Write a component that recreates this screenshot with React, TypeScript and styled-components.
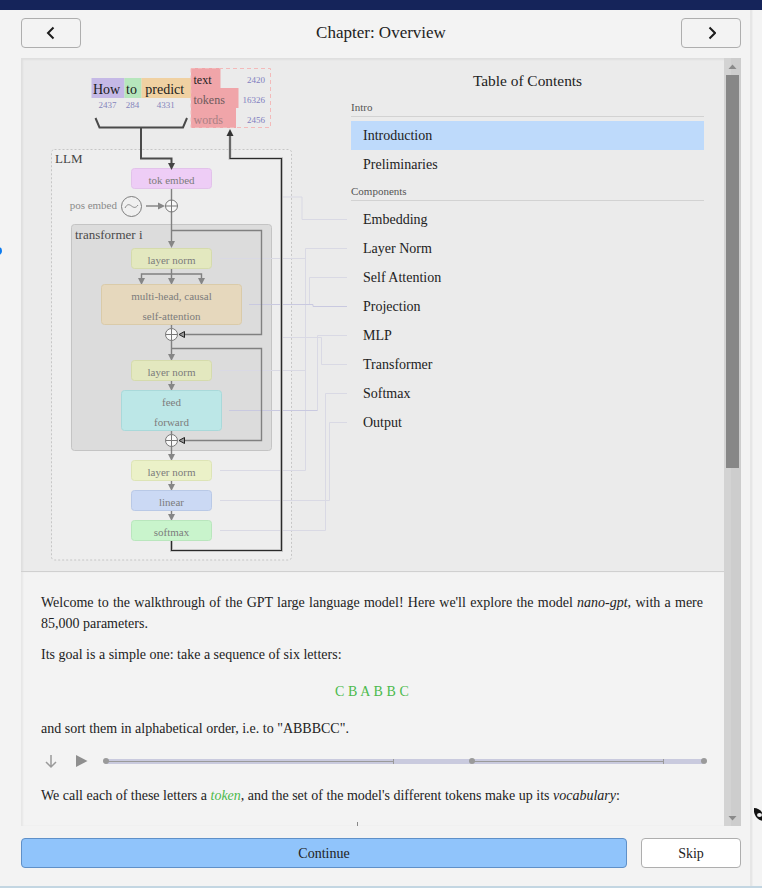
import React from "react";
import styled, { createGlobalStyle } from "styled-components";

const Global = createGlobalStyle`
  html, body { margin: 0; padding: 0; background: #f4f4f4; }
  body { font-family: "Liberation Serif", "Times New Roman", serif; color: #222; }
`;

const Page = styled.div`
  position: relative;
  width: 762px;
  height: 888px;
  overflow: hidden;
  background: #f4f4f4;
  display: flex;
  flex-direction: column;
  border-bottom: 0;
`;
const TopBar = styled.div`
  height: 10px;
  background: #15245a;
  flex: none;
`;
const Body = styled.div`
  flex: 1;
  display: flex;
  min-height: 0;
  border-bottom: 2px solid #c3d6e2;
`;
const Main = styled.main`
  width: 750px;
  flex: none;
  background: #f3f3f3;
  padding: 8px 9px 0 21px;
  box-sizing: border-box;
  display: flex;
  flex-direction: column;
`;
const SideStrip = styled.aside`
  flex: 1;
  background: #f4f4f4;
  border-left: 2px solid #e6e6e6;
  box-shadow: inset 1px 0 1px #eeeeee;
`;
const Header = styled.header`
  height: 30px;
  display: flex;
  align-items: center;
  justify-content: space-between;
  flex: none;
`;
const NavButton = styled.button`
  width: 60px;
  height: 30px;
  padding: 0;
  display: flex;
  align-items: center;
  justify-content: center;
  background: #f3f3f3;
  border: 1px solid #aeaeae;
  border-radius: 4px;
`;
const Title = styled.h1`
  margin: 0;
  font-size: 17px;
  font-weight: 400;
  color: #222;
`;
const Panel = styled.section`
  margin-top: 10px;
  height: 768px;
  flex: none;
  display: flex;
  overflow: hidden;
`;
const Content = styled.div`
  width: 703px;
  flex: none;
  display: flex;
  flex-direction: column;
  overflow: hidden;
  box-shadow: inset 2px 1px 2px rgba(0, 0, 0, 0.06);
`;
const Top = styled.div`
  height: 513px;
  flex: none;
  display: flex;
  background: #ebebeb;
  border-bottom: 1px solid #d0d0d0;
  box-shadow: inset 2px 2px 2px rgba(0, 0, 0, 0.05);
`;
const Diagram = styled.svg`
  width: 330px;
  height: 513px;
  flex: none;
  display: block;
`;
const Toc = styled.nav`
  width: 353px;
  flex: none;
`;
const TocTitle = styled.div`
  margin-top: 12px;
  height: 21px;
  line-height: 21px;
  text-align: center;
  font-size: 15.4px;
  color: #222;
`;
const SectionLabel = styled.div<{ $gap: number }>`
  margin-top: ${(p) => p.$gap}px;
  margin-bottom: 4px;
  height: 16px;
  line-height: 15px;
  font-size: 11px;
  color: #555;
  border-bottom: 1px solid #d2d2d2;
`;
const TocRow = styled.div<{ $active?: boolean }>`
  height: 29px;
  line-height: 29px;
  padding-left: 12px;
  font-size: 14px;
  color: #222;
  background: ${(p) => (p.$active ? "#bedafb" : "transparent")};
`;
const TextArea = styled.div`
  flex: 1;
  min-height: 0;
  overflow: hidden;
  padding: 20px 21px 0 20px;
  background: #f3f3f3;
  box-shadow: inset 2px 0 2px rgba(0, 0, 0, 0.05);
`;
const Para = styled.p`
  margin: 0 0 10px;
  font-size: 14px;
  line-height: 21px;
  text-align: justify;
  color: #222;
`;
const Letters = styled.div`
  margin: 16px 0;
  height: 21px;
  line-height: 21px;
  text-align: center;
  font-size: 14px;
  letter-spacing: 0.12px;
  color: #4cba4c;
`;
const TokenWord = styled.em`
  color: #4cba4c;
`;
const Timeline = styled.div`
  margin: 10px 0 12px;
  height: 24px;
  display: flex;
  align-items: center;
`;
const IconSlot = styled.div<{ $w: number }>`
  width: ${(p) => p.$w}px;
  flex: none;
  display: flex;
  align-items: center;
`;
const Track = styled.div`
  flex: 1;
  position: relative;
  height: 5px;
  background: #c9cade;
  margin-left: 1px;
`;
const Played = styled.div<{ $l: number; $w: number }>`
  position: absolute;
  left: ${(p) => p.$l}px;
  width: ${(p) => p.$w}px;
  top: 2px;
  height: 1px;
  background: #9a9a9a;
  &::after {
    content: "";
    position: absolute;
    right: -1px;
    top: -2px;
    width: 1px;
    height: 5px;
    background: #9a9a9a;
  }
`;
const Dot = styled.div<{ $l: number }>`
  position: absolute;
  left: ${(p) => p.$l - 3}px;
  top: -0.5px;
  width: 6px;
  height: 6px;
  border-radius: 50%;
  background: #9a9a9a;
`;
const Tick = styled.div`
  margin: 16px 0 0 316px;
  width: 1px;
  height: 20px;
  background: #888;
`;
const ScrollTrack = styled.div`
  width: 17px;
  flex: none;
  display: flex;
  flex-direction: column;
  align-items: center;
  background: linear-gradient(90deg, #d3d3d3 0 7px, #cdcdcd 7px);
`;
const ScrollCap = styled.div`
  height: 17px;
  flex: none;
  display: flex;
  align-items: center;
  justify-content: center;
`;
const Thumb = styled.div`
  width: 13px;
  height: 393px;
  flex: none;
  background: #878787;
`;
const ScrollSpace = styled.div`
  flex: 1;
`;
const Actions = styled.footer`
  margin-top: 12px;
  display: flex;
  gap: 14px;
  flex: none;
`;
const Continue = styled.button`
  width: 606px;
  height: 30px;
  padding: 1px 0 0;
  background: #90c4fb;
  border: 1px solid #5f90c8;
  border-radius: 4px;
  font: 14px "Liberation Serif", serif;
  color: #222;
`;
const Skip = styled.button`
  width: 100px;
  height: 30px;
  padding: 1px 0 0;
  background: #ffffff;
  border: 1px solid #aeaeae;
  border-radius: 4px;
  font: 14px "Liberation Serif", serif;
  color: #222;
`;
const EdgeDot = styled.div`
  position: absolute;
  left: -6px;
  top: 247px;
  width: 8px;
  height: 8px;
  border-radius: 50%;
  background: #0b7bf0;
`;
const Cursor = styled.svg`
  position: absolute;
  left: 753px;
  top: 807px;
  width: 11px;
  height: 15px;
`;

/* diagram parts */
const SvgLabel = styled.text<{ $size?: number; $fill?: string; $anchor?: string }>`
  font-family: "Liberation Serif", serif;
  font-size: ${(p) => p.$size ?? 11}px;
  fill: ${(p) => p.$fill ?? "#7c7c7c"};
  text-anchor: ${(p) => p.$anchor ?? "middle"};
`;
const Wire = styled.path`
  fill: none;
  stroke: #808080;
  stroke-width: 1.4;
`;
const DarkWire = styled.path`
  fill: none;
  stroke: #4a4a4a;
  stroke-width: 2;
`;
const Halo = styled.path`
  fill: none;
  stroke: #c8c8c8;
  stroke-width: 3;
`;
const BlackWire = styled.path`
  fill: none;
  stroke: #2a2a2a;
  stroke-width: 1.2;
`;
const Leader = styled.path`
  fill: none;
  stroke: #d9d9e4;
  stroke-width: 1;
`;
const LeaderStrong = styled(Leader)`
  stroke: #c9c9e0;
`;

const Box: React.FC<{
  x: number; y: number; w: number; h: number; fill: string; stroke: string; lines: string[];
}> = ({ x, y, w, h, fill, stroke, lines }) => (
  <g>
    <rect x={x} y={y} width={w} height={h} rx={3} fill={fill} stroke={stroke} />
    {lines.map((t, i) => (
      <SvgLabel key={t} x={x + w / 2} y={lines.length === 1 ? y + 15.5 : y + 15 + i * 20}>
        {t}
      </SvgLabel>
    ))}
  </g>
);
const Down: React.FC<{ x: number; y: number; fill?: string }> = ({ x, y, fill = "#868686" }) => (
  <polygon points={`${x - 3.5},${y - 7} ${x + 3.5},${y - 7} ${x},${y}`} fill={fill} />
);
const Plus: React.FC<{ y: number }> = ({ y }) => (
  <g>
    <circle cx={171.5} cy={y} r={6} fill="#f8f8f8" stroke="#777" strokeWidth={1} />
    <path d={`M165.5 ${y}h12M171.5 ${y - 6}v12`} stroke="#777" strokeWidth={1} />
  </g>
);
const SideHead: React.FC<{ y: number }> = ({ y }) => (
  <polygon points={`179,${y} 184.5,${y - 3} 184.5,${y + 3}`} fill="#9a9a9a" stroke="#222" strokeWidth={1} />
);

const TokenCell: React.FC<{ x: number; w: number; fill: string; text: string; num: string }> = ({ x, w, fill, text, num }) => (
  <g>
    <rect x={x} y={78} width={w} height={20} fill={fill} />
    <SvgLabel x={x + w / 2 - 1.5} y={94} $size={14} $fill="#1c1c1c">{text}</SvgLabel>
    <SvgLabel x={x + w / 2 - 0.5} y={108} $size={9} $fill="#8484bc">{num}</SvgLabel>
  </g>
);
const OutputRow: React.FC<{ y: number; w: number; text: string; num: string; color: string }> = ({ y, w, text, num, color }) => (
  <g>
    <rect x={191} y={y} width={w} height={20} fill="#f0a5a9" />
    <SvgLabel x={193.5} y={y + 16} $size={12} $anchor="start" $fill={color}>{text}</SvgLabel>
    <SvgLabel x={265} y={y + 15} $size={9} $anchor="end" $fill="#7f7fc0">{num}</SvgLabel>
  </g>
);

const Arch: React.FC = () => (
  <Diagram viewBox="21 58 330 513">
    {/* tokens in */}
    <TokenCell x={91.5} w={33} fill="#c5b9e6" text="How" num="2437" />
    <TokenCell x={124.5} w={17} fill="#b6e6bc" text="to" num="284" />
    <TokenCell x={141.5} w={49.5} fill="#f0d1a2" text="predict" num="4331" />

    {/* tokens out */}
    <OutputRow y={68} w={29.5} text="text" num="2420" color="#222" />
    <OutputRow y={88} w={47.5} text="tokens" num="16326" color="#6e5a5c" />
    <OutputRow y={108} w={45} text="words" num="2456" color="#a98084" />
    <rect x={191} y={68.5} width={79.5} height={59} fill="none" stroke="#f3baba" strokeDasharray="4 3" />

    {/* llm frame */}
    <rect x={51.5} y={149.5} width={240} height={410.5} rx={3} fill="#eeeeee" stroke="#c6c6c6" strokeDasharray="2 2" />
    <SvgLabel x={55} y={163} $size={13} $anchor="start" $fill="#444">LLM</SvgLabel>

    {/* transformer frame */}
    <rect x={71.5} y={224.5} width={200} height={226} rx={3} fill="#dcdcdc" stroke="#c4c4c4" />
    <SvgLabel x={75} y={239} $size={13} $anchor="start" $fill="#4a4a4a">transformer i</SvgLabel>

    {/* leaders */}
    <Leader d="M280 197H302V219.5H347" />
    <Leader d="M347 248.5H305.5V470.5H220" />
    <Leader d="M220 258.5H305.5M220 370.5H305.5" />
    <Leader d="M347 277.5H309.5V304" />
    <LeaderStrong d="M249 304.5H313V306.5H347" />
    <Leader d="M347 335.5H317.5V410.5" />
    <LeaderStrong d="M229 410.5H317.5" />
    <Leader d="M280 337.5H321.5V364.5H347" />
    <Leader d="M347 393.5H325.5V530.5H220" />
    <Leader d="M347 422.5H329.5V500.5H220" />

    {/* grey flow */}
    <Wire d="M171.5 189V242" />
    <Wire d="M171.5 230.5H261.5V334.5H185" />
    <Wire d="M171.5 268V278M141.5 278V274H201.5V278M171.5 324V328M171.5 340V354M171.5 348.5H261.5V440.5H185M171.5 380V384M171.5 430V434M171.5 446V454M171.5 480V484M171.5 510V514" />
    <Wire d="M146 206H160" />
    <Down x={171.5} y={248} />
    <Down x={141.5} y={285} />
    <Down x={171.5} y={285} />
    <Down x={201.5} y={285} />
    <Down x={171.5} y={361} />
    <Down x={171.5} y={391} />
    <Down x={171.5} y={461} />
    <Down x={171.5} y={491} />
    <Down x={171.5} y={521} />
    <polygon points="165,206 158,202.5 158,209.5" fill="#868686" />
    <SideHead y={334.5} />
    <SideHead y={440.5} />

    {/* blocks */}
    <Box x={131.5} y={168.5} w={80} h={20} fill="#eecdf6" stroke="#e2c2ea" lines={["tok embed"]} />
    <Box x={131.5} y={248.5} w={80} h={20} fill="#e3e8bf" stroke="#d5dbac" lines={["layer norm"]} />
    <Box x={101.5} y={284.5} w={140} h={40} fill="#e6d8bd" stroke="#dacba9" lines={["multi-head, causal", "self-attention"]} />
    <Box x={131.5} y={360.5} w={80} h={20} fill="#e3e8bf" stroke="#d5dbac" lines={["layer norm"]} />
    <Box x={121.5} y={390.5} w={100} h={40} fill="#bce7e7" stroke="#a9d9da" lines={["feed", "forward"]} />
    <Box x={131.5} y={460.5} w={80} h={20} fill="#ebf1c8" stroke="#dde4b6" lines={["layer norm"]} />
    <Box x={131.5} y={490.5} w={80} h={20} fill="#cbd9f4" stroke="#b9c9e6" lines={["linear"]} />
    <Box x={131.5} y={520.5} w={80} h={20} fill="#c9f4cc" stroke="#b9e6bd" lines={["softmax"]} />

    {/* positional */}
    <SvgLabel x={117} y={209} $anchor="end" $fill="#8a8a8a">pos embed</SvgLabel>
    <circle cx={131.5} cy={206.5} r={10} fill="#f0f0f0" stroke="#7c7c7c" />
    <path d="M125 208c2-4 4-4 6.500-2s4.500 2 6.500-1" fill="none" stroke="#8a8a8a" />
    <Plus y={206} />
    <Plus y={334.5} />
    <Plus y={440.5} />

    {/* input bracket */}
    <DarkWire d="M95.500 118L99.500 127.500H183L187 118" />
    <DarkWire d="M141 127.500V158.500H171.500V165" />
    <polygon points="168,163 175,163 171.500,170" fill="#444" />

    {/* output loop */}
    <Halo d="M171.500 541V550.500H281.500V158.500H230V136" />
    <BlackWire d="M171.500 541V550.500H281.500V158.500H230V136" />
    <polygon points="226.500,136 233.500,136 230,129" fill="#333" />
  </Diagram>
);

const Chevron: React.FC<{ dir: "left" | "right" }> = ({ dir }) => (
  <svg width="10" height="14" viewBox="0 0 10 14">
    <path d={dir === "left" ? "M7.500 1.500L2 7l5.500 5.500" : "M3.500 1.500L9 7l-5.500 5.500"} fill="none" stroke="#1c1c1c" strokeWidth={2} />
  </svg>
);

const intro = ["Introduction", "Preliminaries"];
const components = ["Embedding", "Layer Norm", "Self Attention", "Projection", "MLP", "Transformer", "Softmax", "Output"];

export default function App() {
  return (
    <>
      <Global />
      <Page>
        <TopBar />
        <Body>
          <Main>
            <Header>
              <NavButton aria-label="Previous"><Chevron dir="left" /></NavButton>
              <Title>Chapter: Overview</Title>
              <NavButton aria-label="Next"><Chevron dir="right" /></NavButton>
            </Header>
            <Panel>
              <Content>
                <Top>
                  <Arch />
                  <Toc>
                    <TocTitle>Table of Contents</TocTitle>
                    <SectionLabel $gap={9}>Intro</SectionLabel>
                    {intro.map((t, i) => <TocRow key={t} $active={i === 0}>{t}</TocRow>)}
                    <SectionLabel $gap={5}>Components</SectionLabel>
                    {components.map((t) => <TocRow key={t}>{t}</TocRow>)}
                  </Toc>
                </Top>
                <TextArea>
                  <Para>
                    Welcome to the walkthrough of the GPT large language model! Here we'll explore the model <em>nano-gpt</em>, with a mere 85,000 parameters.
                  </Para>
                  <Para>Its goal is a simple one: take a sequence of six letters:</Para>
                  <Letters>C B A B B C</Letters>
                  <Para>and sort them in alphabetical order, i.e. to "ABBBCC".</Para>
                  <Timeline>
                    <IconSlot $w={34}>
                      <svg width="20" height="16" viewBox="0 0 20 16">
                        <path d="M10 2v12M5 9l5 5 5-5" fill="none" stroke="#9a9a9a" strokeWidth={1.5} />
                      </svg>
                    </IconSlot>
                    <IconSlot $w={29}>
                      <svg width="14" height="14" viewBox="0 0 14 14">
                        <polygon points="1,1 12.500,7 1,13" fill="#8f8f8f" />
                      </svg>
                    </IconSlot>
                    <Track>
                      <Played $l={0} $w={288} />
                      <Played $l={366} $w={192} />
                      <Dot $l={1} />
                      <Dot $l={367} />
                      <Dot $l={599} />
                    </Track>
                  </Timeline>
                  <Para>
                    We call each of these letters a <TokenWord>token</TokenWord>, and the set of the model's different tokens make up its <em>vocabulary</em>:
                  </Para>
                  <Tick />
                </TextArea>
              </Content>
              <ScrollTrack>
                <ScrollCap>
                  <svg width="9" height="6" viewBox="0 0 9 6"><polygon points="4.500,0.500 8.500,5 0.500,5" fill="#8a8a8a" /></svg>
                </ScrollCap>
                <Thumb />
                <ScrollSpace />
                <ScrollCap>
                  <svg width="9" height="6" viewBox="0 0 9 6"><polygon points="0.500,1 8.500,1 4.500,5.500" fill="#8a8a8a" /></svg>
                </ScrollCap>
              </ScrollTrack>
            </Panel>
            <Actions>
              <Continue>Continue</Continue>
              <Skip>Skip</Skip>
            </Actions>
          </Main>
          <SideStrip />
        </Body>
        <EdgeDot />
        <Cursor viewBox="0 0 11 15">
          <path d="M1 1c5 0 9 4 10 9l0 4c-5 0-9-4-10-9z" fill="#111" />
          <ellipse cx="6.500" cy="8" rx="2.500" ry="2" fill="#eee" />
        </Cursor>
      </Page>
    </>
  );
}
